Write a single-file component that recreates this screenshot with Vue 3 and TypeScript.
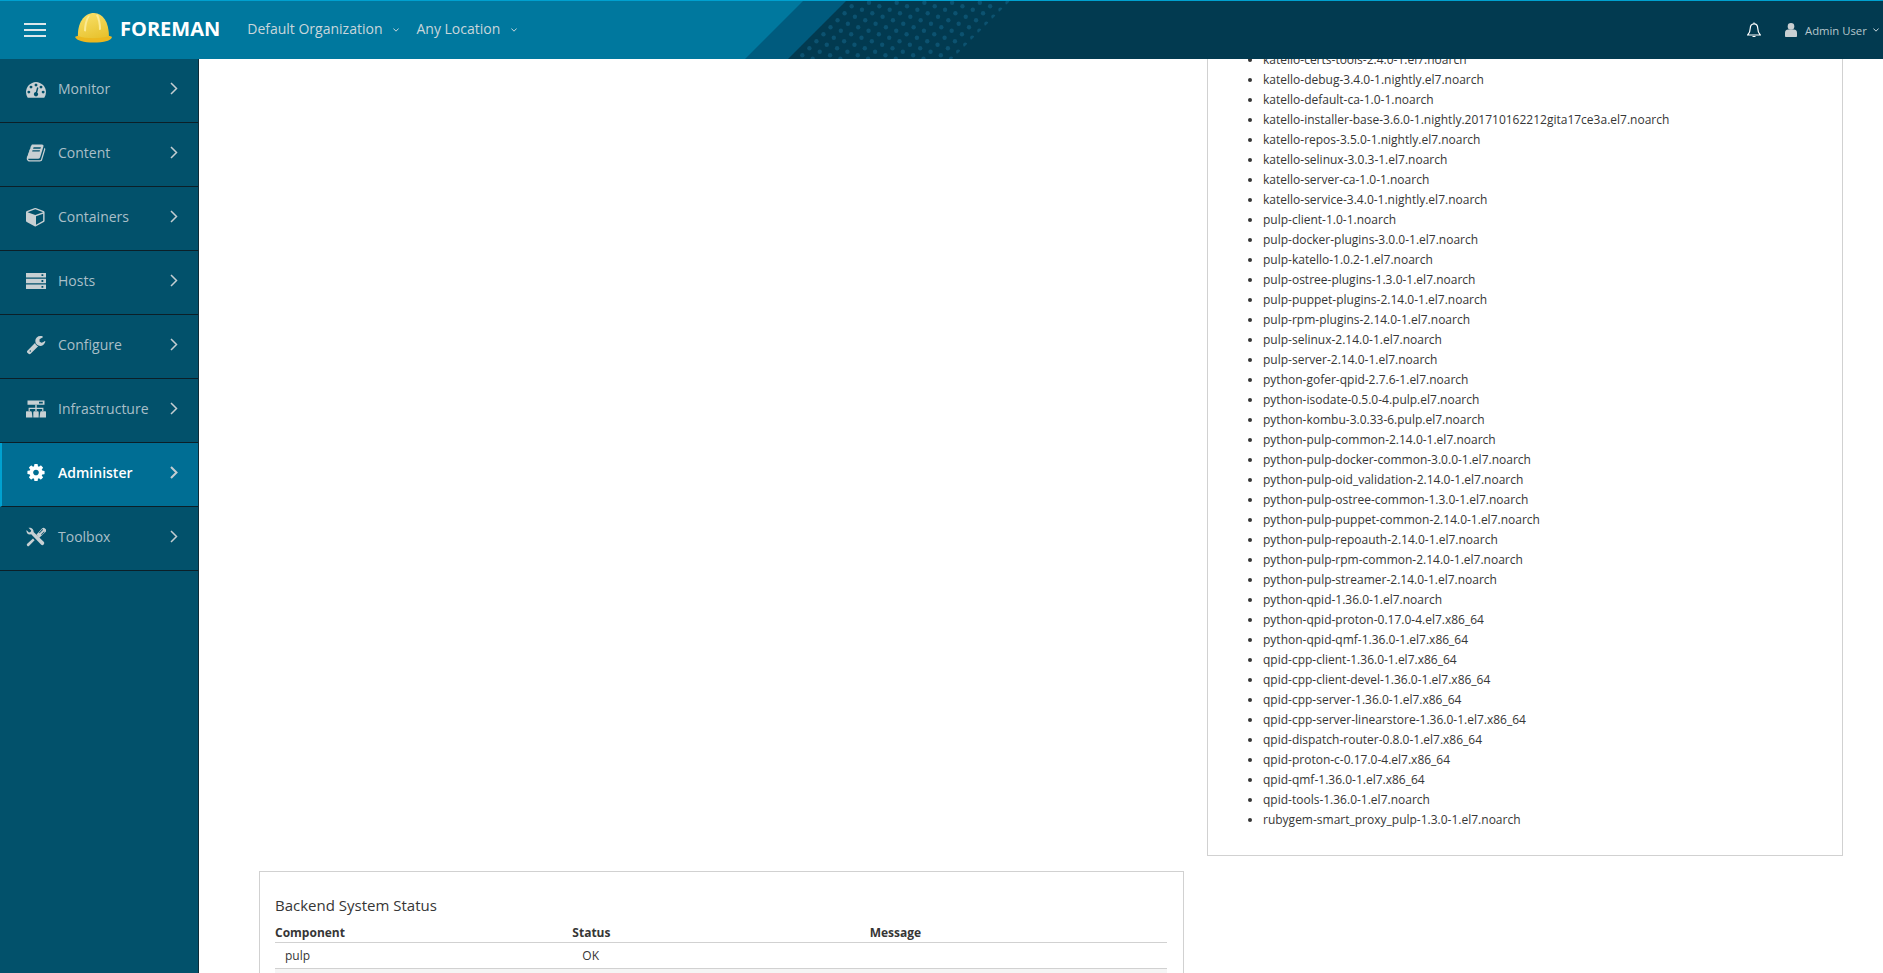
<script setup lang="ts">
interface NavItem {
  label: string;
  box: string;
  size: number;
  paths: string[];
  active?: boolean;
}

const fa = "0 0 1792 1792";

const navItems: NavItem[] = [
  {
    label: "Monitor",
    box: "0 180 1792 1300",
    size: 21,
    paths: [
      "M384 1152q0-53-37.500-90.500t-90.500-37.500-90.500 37.500-37.500 90.500 37.500 90.500 90.500 37.500 90.500-37.500 37.500-90.500zm192-448q0-53-37.500-90.500t-90.500-37.500-90.500 37.500-37.500 90.500 37.500 90.500 90.500 37.500 90.500-37.500 37.500-90.500zm428 481l101-382q6-26-7.500-48.500t-38.500-29.500-48 6.500-30 39.500l-101 382q-60 5-107 43.500t-63 98.500q-20 77 20 146t117 89 146-20 89-117q16-60-6-117t-72-91zm660-33q0-53-37.500-90.500t-90.500-37.500-90.500 37.500-37.500 90.500 37.500 90.500 90.500 37.500 90.500-37.500 37.500-90.500zm-640-640q0-53-37.500-90.500t-90.500-37.500-90.500 37.500-37.500 90.500 37.500 90.500 90.500 37.500 90.500-37.500 37.500-90.500zm448 192q0-53-37.500-90.500t-90.500-37.500-90.500 37.500-37.500 90.500 37.500 90.500 90.500 37.500 90.500-37.500 37.500-90.500zm320 448q0 261-141 483-19 29-54 29h-1402q-35 0-54-29-141-221-141-483 0-182 71-348t191-286 286-191 348-71 348 71 286 191 191 286 71 348z",
    ],
  },
  {
    label: "Content",
    box: fa,
    size: 20,
    paths: [
      "M1703 478q40 57 18 129l-275 906q-19 64-76.500 107.500t-122.500 43.500h-923q-77 0-148.500-53.500t-99.500-131.500q-24-67-2-127 0-4 3-27t4-37q1-8-3-21.500t-3-19.500q2-11 8-21t16.500-23.500 16.500-23.500q23-38 45-91.500t30-91.500q3-10 .5-30t-.5-28q3-11 17-28t17-23q21-36 42-92t25-90q1-9-2.500-32t.5-28q4-13 22-30.500t22-22.500q19-26 42.500-84.500t27.500-96.500q1-8-3-25.500t-2-26.500q2-8 9-18t18-23 17-21q8-12 16.500-30.500t15-35 16-36 19.500-32 26.500-23.500 36-11.500 47.500 5.500l-1 3q38-9 51-9h761q74 0 114 56t18 130l-274 906q-36 119-71.500 153.500t-128.500 34.500h-869q-27 0-38 15-11 16-1 43 24 70 144 70h923q29 0 56-15.500t35-41.500l300-987q7-22 5-57 38 15 59 43zm-1064 2q-4 13 2 22.500t20 9.500h608q13 0 25.500-9.500t16.500-22.500l21-64q4-13-2-22.500t-20-9.500h-608q-13 0-25.500 9.500t-16.500 22.500zm-83 256q-4 13 2 22.500t20 9.500h608q13 0 25.500-9.500t16.500-22.500l21-64q4-13-2-22.500t-20-9.500h-608q-13 0-25.500 9.500t-16.500 22.500z",
    ],
  },
  {
    label: "Containers",
    box: fa,
    size: 21,
    paths: [
      "M896 1629l640-349v-636l-640 233v752zm-64-865l698-254-698-254-698 254zm832-252v768q0 35-18 65t-49 47l-704 384q-28 16-61 16t-61-16l-704-384q-31-17-49-47t-18-65v-768q0-40 23-73t61-47l704-256q22-8 44-8t44 8l704 256q38 14 61 47t23 73z",
    ],
  },
  {
    label: "Hosts",
    box: "0 0 20 16",
    size: 20,
    paths: [
      "M0 0h20v4.400h-20zM15.500 1.300v1.800h1.800v-1.800zM0 5.800h20v4.400h-20zM15.500 7.100v1.800h1.800v-1.800zM0 11.600h20v4.400h-20zM15.500 12.900v1.800h1.800v-1.800z",
    ],
  },
  {
    label: "Configure",
    box: fa,
    size: 21,
    paths: [
      "M448 1472q0-26-19-45t-45-19-45 19-19 45 19 45 45 19 45-19 19-45zm644-420l-682 682q-37 37-90 37-52 0-91-37l-106-108q-38-36-38-90 0-53 38-91l681-681q39 98 114.500 173.500t173.500 114.500zm634-435q0 39-23 106-47 134-164.500 217.500t-258.500 83.500q-185 0-316.500-131.500t-131.500-316.500 131.500-316.500 316.500-131.500q58 0 121.500 16.500t107.500 46.500q16 11 16 28t-16 28l-293 169v224l193 107q5-3 79-48.500t135.500-81 70.500-35.500q15 0 23.500 10t8.500 25z",
    ],
  },
  {
    label: "Infrastructure",
    box: "0 0 20 17",
    size: 20,
    paths: [
      "M1.500 0h17v4.300h-17zM13 1.300v1.700h3.800v-1.700z",
      "M9.300 4.300h1.400v3h-1.400zM2.600 7.300h14.800v1.200h-14.800zM2.600 8.500h1.200v2h-1.200zM9.300 8.500h1.400v2h-1.400zM16.200 8.500h1.200v2h-1.200z",
      "M1.500 10.800h3.300a1 1 0 0 1 1 1l.7 5.200h-6.500v-5.200a1 1 0 0 1 1.500-1zM8.300 10.800h3.400a1 1 0 0 1 1 1v5.200h-5.400v-5.200a1 1 0 0 1 1-1zM15.200 10.800h3.300a1 1 0 0 1 1.500 1v5.200h-6.500l.7-5.200a1 1 0 0 1 1-1z",
    ],
  },
  {
    label: "Administer",
    box: fa,
    size: 21,
    active: true,
    paths: [
      "M1152 896q0-106-75-181t-181-75-181 75-75 181 75 181 181 75 181-75 75-181zm512-109v222q0 12-8 23t-20 13l-185 28q-19 54-39 91 35 50 107 138 10 12 10 25t-9 23q-27 37-99 108t-94 71q-12 0-26-9l-138-108q-44 23-91 38-16 136-29 186-7 28-36 28h-222q-14 0-24.500-8.500t-11.500-21.500l-28-184q-49-16-90-37l-141 107q-10 9-25 9-14 0-25-11-126-114-165-168-7-10-7-23 0-12 8-23 15-21 51-66.500t54-70.500q-27-50-41-99l-183-27q-13-2-21-12.500t-8-23.500v-222q0-12 8-23t19-13l186-28q14-46 39-92-40-57-107-138-10-12-10-24 0-10 9-23 26-36 98.500-107.500t94.500-71.500q13 0 26 10l138 107q44-23 91-38 16-136 29-186 7-28 36-28h222q14 0 24.500 8.500t11.500 21.500l28 184q49 16 90 37l142-107q9-9 24-9 13 0 25 10 129 119 165 170 7 8 7 22 0 12-8 23-15 21-51 66.500t-54 70.500q26 50 41 98l183 28q13 2 21 12.500t8 23.500z",
    ],
  },
  {
    label: "Toolbox",
    box: "0 0 20 20",
    size: 20,
    paths: [
      "M2.500.8l2.700 2.700-.6 1.500-1.600.4-2.500-2.400c-.4 2.500 1 4.500 3.500 4.500l1.200-.2 9.800 10.200a1.800 1.800 0 0 0 2.700-2.700l-10.100-9.700c.4-2.500-2.100-4.900-5.100-4.300z",
      "M10.500 7.500l5.500-6a2 2 0 0 1 3 0l.5.5a2 2 0 0 1 0 3l-6.500 6zM13 5.700l.6.600 3.500-3.600-.6-.6zM15 7.500l.6.600 3-3.100-.6-.6z",
      "M7 11.600l1.600 1.600-5.400 5.600a1.300 1.300 0 0 1-2-2z",
    ],
  },
];

const packages = [
  "katello-certs-tools-2.4.0-1.el7.noarch",
  "katello-debug-3.4.0-1.nightly.el7.noarch",
  "katello-default-ca-1.0-1.noarch",
  "katello-installer-base-3.6.0-1.nightly.201710162212gita17ce3a.el7.noarch",
  "katello-repos-3.5.0-1.nightly.el7.noarch",
  "katello-selinux-3.0.3-1.el7.noarch",
  "katello-server-ca-1.0-1.noarch",
  "katello-service-3.4.0-1.nightly.el7.noarch",
  "pulp-client-1.0-1.noarch",
  "pulp-docker-plugins-3.0.0-1.el7.noarch",
  "pulp-katello-1.0.2-1.el7.noarch",
  "pulp-ostree-plugins-1.3.0-1.el7.noarch",
  "pulp-puppet-plugins-2.14.0-1.el7.noarch",
  "pulp-rpm-plugins-2.14.0-1.el7.noarch",
  "pulp-selinux-2.14.0-1.el7.noarch",
  "pulp-server-2.14.0-1.el7.noarch",
  "python-gofer-qpid-2.7.6-1.el7.noarch",
  "python-isodate-0.5.0-4.pulp.el7.noarch",
  "python-kombu-3.0.33-6.pulp.el7.noarch",
  "python-pulp-common-2.14.0-1.el7.noarch",
  "python-pulp-docker-common-3.0.0-1.el7.noarch",
  "python-pulp-oid_validation-2.14.0-1.el7.noarch",
  "python-pulp-ostree-common-1.3.0-1.el7.noarch",
  "python-pulp-puppet-common-2.14.0-1.el7.noarch",
  "python-pulp-repoauth-2.14.0-1.el7.noarch",
  "python-pulp-rpm-common-2.14.0-1.el7.noarch",
  "python-pulp-streamer-2.14.0-1.el7.noarch",
  "python-qpid-1.36.0-1.el7.noarch",
  "python-qpid-proton-0.17.0-4.el7.x86_64",
  "python-qpid-qmf-1.36.0-1.el7.x86_64",
  "qpid-cpp-client-1.36.0-1.el7.x86_64",
  "qpid-cpp-client-devel-1.36.0-1.el7.x86_64",
  "qpid-cpp-server-1.36.0-1.el7.x86_64",
  "qpid-cpp-server-linearstore-1.36.0-1.el7.x86_64",
  "qpid-dispatch-router-0.8.0-1.el7.x86_64",
  "qpid-proton-c-0.17.0-4.el7.x86_64",
  "qpid-qmf-1.36.0-1.el7.x86_64",
  "qpid-tools-1.36.0-1.el7.noarch",
  "rubygem-smart_proxy_pulp-1.3.0-1.el7.noarch",
];

// header dot lattice: rows every 3.5px, each shifted 10.33px, period 27.7px
const dots: { x: number; y: number }[] = [];
for (let row = 0; row < 18; row++) {
  const y = 1.7 + row * 3.5;
  const shift = ((869 + row * 10.33 - 780) % 27.7) + 780;
  for (let x = shift; x < 1030; x += 27.7) {
    dots.push({ x, y });
  }
}
</script>

<template>
  <div class="page">
    <header class="topbar">
      <svg class="decor" width="1883" height="58" viewBox="0 0 1883 58">
        <defs>
          <clipPath id="dotArea">
            <polygon points="846,0 1010,0 952,58 788,58" />
          </clipPath>
        </defs>
        <polygon points="803,0 1883,0 1883,58 745,58" fill="#005b7e" />
        <polygon points="846,0 1883,0 1883,58 788,58" fill="#023a50" />
        <g clip-path="url(#dotArea)">
          <circle v-for="(d, i) in dots" :key="i" :cx="d.x" :cy="d.y" r="2.2" fill="#0c5270" />
        </g>
      </svg>

      <div class="burger"><span></span><span></span><span></span></div>

      <svg class="hat" width="37" height="30" viewBox="0 0 37 30">
        <defs>
          <linearGradient id="hatFill" x1="0.2" y1="0" x2="0.6" y2="1">
            <stop offset="0" stop-color="#f8e068" />
            <stop offset="1" stop-color="#e8c22e" />
          </linearGradient>
        </defs>
        <path d="M3 25C2 10 9 0 19 0c9 0 15 9 15 24-8 3-22 4-31 1z" fill="url(#hatFill)" />
        <path d="M13 3c-3 4-4 10-4 15l2 .5c0-6 1-11 4-16zM21 2c2 4 3 9 3 15l2-.5c0-6-1-10-3-15z" fill="#fbea94" />
        <path d="M0 24c1-1 2-1 3-1 8 3 22 3 31 0 1 0 2 0 3 1-1 3-3 3-5 4-8 2-19 2-26 0-3-1-5-2-6-4z" fill="#ecb81f" />
      </svg>
      <span class="brand">FOREMAN</span>

      <span class="ctx org">Default Organization</span>
      <svg class="caret" width="6" height="4" viewBox="0 0 6 4"><path d="M.4.5L3 3.200 5.600.5" /></svg>
      <span class="ctx loc">Any Location</span>
      <svg class="caret" width="6" height="4" viewBox="0 0 6 4"><path d="M.4.5L3 3.200 5.600.5" /></svg>

      <div class="user-area">
        <svg class="bell" width="14" height="16" viewBox="0 0 14 16">
          <path d="M7 1.800c-2.600 0-3.700 2-3.700 4.300 0 3-.9 5-2.600 6.900h12.600c-1.700-1.900-2.600-3.900-2.600-6.900 0-2.300-1.100-4.300-3.700-4.300z" />
          <path d="M7 .5v1.300M5.500 14.500h3" />
        </svg>
        <svg class="person" width="12" height="14" viewBox="0 0 12 14">
          <circle cx="6" cy="3.400" r="3.300" />
          <path d="M0 13v-3.500c0-1.800 1.500-3 3-3h6c1.500 0 3 1.200 3 3V13c0 .6-.5 1-1 1H1c-.5 0-1-.4-1-1z" />
        </svg>
        <span class="username">Admin User</span>
        <svg class="caret" width="6" height="4" viewBox="0 0 6 4"><path d="M.4.5L3 3.200 5.600.5" /></svg>
      </div>
    </header>

    <div class="body">
      <nav class="sidebar">
        <a v-for="item in navItems" :key="item.label" class="nav-item" :class="{ active: item.active }">
          <span class="nav-icon">
            <svg :width="item.size" :height="item.size" :viewBox="item.box">
              <path v-for="d in item.paths" :key="d" :d="d" fill-rule="evenodd" />
            </svg>
          </span>
          <span class="nav-label">{{ item.label }}</span>
          <svg class="nav-arrow" width="8" height="13" viewBox="0 0 8 13"><path d="M1 1l5.500 5.500L1 12" /></svg>
        </a>
      </nav>

      <main class="content">
        <div class="top-row">
          <div></div>
          <section class="panel packages">
            <ul>
              <li v-for="p in packages" :key="p">{{ p }}</li>
            </ul>
          </section>
        </div>

        <section class="panel backend">
          <h3>Backend System Status</h3>
          <table>
            <thead>
              <tr>
                <th>Component</th>
                <th>Status</th>
                <th>Message</th>
              </tr>
            </thead>
            <tbody>
              <tr>
                <td>pulp</td>
                <td>OK</td>
                <td></td>
              </tr>
              <tr class="striped">
                <td>&nbsp;</td>
                <td></td>
                <td></td>
              </tr>
            </tbody>
          </table>
        </section>
      </main>
    </div>
  </div>
</template>

<style scoped>
.page {
  display: flex;
  flex-direction: column;
  height: 973px;
  overflow: hidden;
  font-family: "Open Sans", sans-serif;
  font-size: 12px;
  color: #363636;
  background: #fff;
}

.topbar {
  position: relative;
  display: flex;
  align-items: center;
  flex: none;
  height: 59px;
  box-sizing: border-box;
  border-top: 1px solid #00a1d0;
  background: #00789e;
  color: #c9d6db;
}

.decor {
  position: absolute;
  left: 0;
  top: 0;
}

.burger {
  position: relative;
  display: flex;
  flex-direction: column;
  gap: 4px;
  width: 22px;
  margin-left: 24px;
}
.burger span {
  height: 2px;
  background: #dce7eb;
}

.hat {
  position: relative;
  margin-left: 29px;
  margin-bottom: 5px;
}

.brand {
  position: relative;
  margin-left: 8px;
  margin-bottom: 3px;
  font-size: 20px;
  font-weight: 700;
  color: #fff;
}

.ctx {
  position: relative;
  font-size: 14px;
  margin-bottom: 3px;
}
.org {
  margin-left: 27px;
}
.loc {
  margin-left: 17px;
}

.caret {
  position: relative;
  margin-left: 11px;
  fill: none;
  stroke: #c9d6db;
  stroke-width: 1;
}

.user-area {
  position: relative;
  display: flex;
  align-items: center;
  margin-left: auto;
  padding-right: 4px;
}

.bell {
  fill: none;
  stroke: #fff;
  stroke-width: 1.2;
  margin-right: 24px;
}
.person {
  fill: #c9cfd2;
  margin-right: 8px;
}
.username {
  font-size: 11.3px;
  color: #b6c6cc;
  width: 61px;
  white-space: nowrap;
}
.user-area .caret {
  margin-left: 7px;
}

.body {
  display: flex;
  flex: 1;
  min-height: 0;
}

.sidebar {
  flex: none;
  width: 199px;
  box-sizing: border-box;
  border-right: 1px solid #0e2b37;
  background: #02516b;
}

.nav-item {
  display: flex;
  align-items: center;
  height: 64px;
  box-sizing: border-box;
  padding-left: 26px;
  padding-bottom: 4px;
  border-bottom: 1px solid #0b1f28;
  color: #a9bfc8;
  font-size: 14px;
}
.nav-item.active {
  padding-left: 24px;
  border-left: 2px solid #00a1d0;
  background: #006e94;
  color: #fff;
  font-weight: 600;
}

.nav-icon {
  display: flex;
  justify-content: center;
  width: 20px;
  margin-right: 12px;
  fill: #c8d0d3;
}
.active .nav-icon {
  fill: #fff;
}

.nav-label {
  flex: 1;
}

.nav-arrow {
  margin-right: 20px;
  fill: none;
  stroke: #c4cdd1;
  stroke-width: 1.5;
}
.active .nav-arrow {
  stroke-width: 2;
}

.content {
  flex: 1;
  min-width: 0;
  overflow: hidden;
  padding: 0 40px 0 60px;
}

.top-row {
  display: grid;
  grid-template-columns: 925px 636px;
  column-gap: 23px;
}

.panel {
  box-sizing: border-box;
  border: 1px solid #d1d1d1;
  background: #fff;
}

.packages {
  margin-top: -40px;
  padding: 30px 0 25px;
}
.packages ul {
  margin: 0;
  padding-left: 55px;
}
.packages li {
  line-height: 20px;
}

.backend {
  width: 925px;
  margin-top: 15px;
  padding: 23px 16px 16px 15px;
}
.backend h3 {
  margin: 0 0 7px;
  font-size: 15px;
  font-weight: 400;
  line-height: 20px;
}

table {
  width: 100%;
  border-collapse: collapse;
  table-layout: fixed;
}
th {
  padding: 0;
  height: 20px;
  text-align: left;
  font-weight: 700;
  border-bottom: 1px solid #d1d1d1;
}
td {
  height: 25px;
  padding: 0 0 0 10px;
  border-bottom: 1px solid #d1d1d1;
}
.striped td {
  background: #f5f5f5;
}
</style>
